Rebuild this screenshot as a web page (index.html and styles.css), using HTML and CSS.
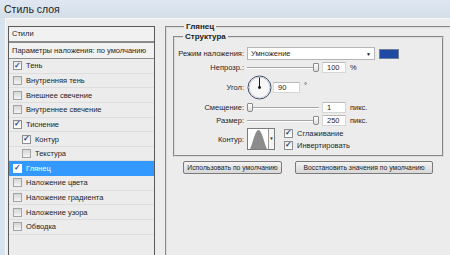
FILE: index.html
```html
<!DOCTYPE html>
<html lang="ru">
<head>
  <meta charset="UTF-8" />
  <title>Стиль слоя</title>
  <link rel="stylesheet" href="styles.css">
</head>
<body>

<div class="window">
  <div class="titlebar">Стиль слоя</div>

  <div class="client">
    <div class="styles-panel">
      <div class="panel-head">Стили</div>
      <div class="panel-blend">Параметры наложения: по умолчанию</div>
      <ul class="style-list">
        <li class="item"><span class="check on">✓</span>Тень</li>
        <li class="item"><span class="check"></span>Внутренняя тень</li>
        <li class="item"><span class="check"></span>Внешнее свечение</li>
        <li class="item"><span class="check"></span>Внутреннее свечение</li>
        <li class="item"><span class="check on">✓</span>Тиснение</li>
        <li class="item sub"><span class="check on">✓</span>Контур</li>
        <li class="item sub"><span class="check"></span>Текстура</li>
        <li class="item active"><span class="check on">✓</span>Глянец</li>
        <li class="item"><span class="check"></span>Наложение цвета</li>
        <li class="item"><span class="check"></span>Наложение градиента</li>
        <li class="item"><span class="check"></span>Наложение узора</li>
        <li class="item"><span class="check"></span>Обводка</li>
        <li class="item empty"></li>
      </ul>
    </div>

    <div class="settings">
      <fieldset class="group outer">
        <legend>Глянец</legend>

        <fieldset class="group inner">
          <legend>Структура</legend>

          <div class="row r-mode">
            <label class="row-label">Режим наложения:</label>
            <div class="select"><span>Умножение</span><span class="arrow">▼</span></div>
            <div class="swatch"></div>
          </div>

          <div class="row r-small">
            <label class="row-label">Непрозр.:</label>
            <div class="slider end"><span class="thumb"></span></div>
            <div class="field">100</div>
            <span class="unit">%</span>
          </div>

          <div class="row r-angle">
            <label class="row-label">Угол:</label>
            <svg class="dial" width="25" height="25" viewBox="0 0 25 25">
              <circle cx="12.5" cy="12.5" r="11.5" fill="#f7f7f7" stroke="#3c4a63" stroke-width="1"/>
              <circle cx="12.5" cy="12.5" r="10.3" fill="none" stroke="#c9ced8" stroke-width="1"/>
              <line x1="12.5" y1="12.5" x2="12.5" y2="2.5" stroke="#1d1d1d" stroke-width="1"/>
              <circle cx="12.5" cy="12.5" r="1.4" fill="#111"/>
            </svg>
            <div class="field angle">90</div>
            <span class="unit deg">°</span>
          </div>

          <div class="row r-small">
            <label class="row-label">Смещение:</label>
            <div class="slider"><span class="thumb"></span></div>
            <div class="field">1</div>
            <span class="unit">пикс.</span>
          </div>

          <div class="row r-small">
            <label class="row-label">Размер:</label>
            <div class="slider end"><span class="thumb"></span></div>
            <div class="field">250</div>
            <span class="unit">пикс.</span>
          </div>

          <div class="row r-contour">
            <label class="row-label">Контур:</label>
            <div class="contour">
              <svg width="19" height="20" viewBox="0 0 19 20">
                <rect width="19" height="20" fill="#fff"/>
                <path d="M1 20 C4 14 6 1 9.5 1 C13 1 15 14 18 20 Z" fill="#8c8c8c"/>
              </svg>
              <span class="contour-arrow">▼</span>
            </div>
            <div class="options">
              <div class="option"><span class="check on">✓</span>Сглаживание</div>
              <div class="option"><span class="check on">✓</span>Инвертировать</div>
            </div>
          </div>
        </fieldset>

        <div class="buttons">
          <button class="btn b-use">Использовать по умолчанию</button>
          <button class="btn b-reset">Восстановить значения по умолчанию</button>
        </div>
      </fieldset>
    </div>
  </div>
</div>

</body>
</html>
```

FILE: styles.css
```css
* { box-sizing: border-box; }
body {
  margin: 0;
  font-family: "Liberation Sans", Arial, sans-serif;
  font-size: 7.5px;
  color: #262626;
  background: #ececec;
}

.window { width: 450px; height: 255px; overflow: hidden; background: #d8e2ed; }
.titlebar {
  height: 18px;
  line-height: 18px;
  padding-left: 4px;
  font-size: 10.5px;
  color: #1e1e1e;
  background: linear-gradient(#dfe8f2, #d3dee9);
}
.client {
  display: flex;
  align-items: flex-start;
  margin-left: 5px;
  height: 237px;
  padding: 7px 0 0 2px;
  background: #ececec;
  border-top: 1px solid #f8f8f8;
  border-left: 1px solid #f8f8f8;
}

/* styles list */
.styles-panel {
  width: 147px;
  height: 240px;
  flex: none;
  border: 1px solid #5a5a5a;
  background: #ececec;
}
.panel-head {
  height: 16px;
  line-height: 13px;
  padding-left: 3px;
  background: #f1f1f1;
  border-bottom: 2px solid #8a8a8a;
}
.panel-blend {
  height: 16px;
  line-height: 15px;
  padding-left: 3px;
  background: #f1f1f1;
  border-bottom: 1px solid #8f8f8f;
}
.style-list { list-style: none; margin: 0; padding: 0; }
.item {
  display: flex;
  align-items: center;
  gap: 4px;
  height: 14.65px;
  padding-left: 4px;
  border-bottom: 1px solid #dedede;
}
.item.sub { padding-left: 13px; }
.item.active { background: #3399ff; color: #fff; border-bottom-color: #3399ff; }
.item.empty { border-bottom: none; }

.check {
  display: inline-flex;
  align-items: center;
  justify-content: center;
  width: 9px;
  height: 9px;
  flex: none;
  border: 1px solid #a3a3a3;
  background: linear-gradient(#d6d6d6, #f4f4f4);
  font-size: 8px;
  line-height: 1;
  font-weight: bold;
  color: #27418a;
}
.check.on { border-color: #8e8f8f; background: linear-gradient(#e8e8e8, #ffffff); }
.item.active .check { background: #fff; border-color: #fff; }

/* settings side */
.settings { margin-left: 10px; margin-top: -4px; }
.group {
  margin: 0;
  border: 2px groove #dcdcdc;
}
.group legend {
  font-weight: bold;
  font-size: 8px;
  line-height: 10px;
  padding: 0 2px;
  color: #1b1b1b;
}
.outer { width: 300px; height: 250px; padding: 0 0 0 6px; }
.outer > legend { margin-left: 11px; }
.inner { width: 271px; margin-top: 0; padding: 5px 0 3px 0; }
.inner > legend { margin-left: 8px; }

.row { display: flex; align-items: center; margin-bottom: 2px; }
.row-label { width: 72px; flex: none; text-align: right; padding-right: 3px; }
.r-mode { height: 13px; }
.r-small { height: 11px; }
.r-angle { height: 25px; margin-top: 1px; }
.r-contour { height: 22px; }

.select {
  display: flex;
  align-items: center;
  justify-content: space-between;
  width: 128px;
  height: 13px;
  padding: 0 3px;
  background: #fff;
  border: 1px solid #b5b5b5;
}
.arrow { font-size: 5px; color: #111; }
.swatch {
  width: 20px;
  height: 10px;
  margin-left: 4px;
  background: #1f4aa3;
  border: 1px solid #6f7f99;
}

.slider {
  display: flex;
  align-items: center;
  width: 72px;
  height: 11px;
  background: linear-gradient(transparent 5px, #a7a7a7 5px, #a7a7a7 6px, #fdfdfd 6px, #fdfdfd 7px, transparent 7px);
}
.slider.end { justify-content: flex-end; }
.thumb {
  width: 6px;
  height: 9px;
  border: 1px solid #8b8b8b;
  border-radius: 1px 1px 2px 2px;
  background: linear-gradient(#ffffff, #dcdcdc);
}
.field {
  width: 24px;
  height: 11px;
  line-height: 10px;
  margin-left: 3px;
  padding-left: 4px;
  background: #fff;
  border: 1px solid #d6d6d6;
  border-top-color: #b9b9b9;
}
.field.angle { width: 27px; margin-left: 1px; }
.unit { margin-left: 4px; }
.unit.deg { align-self: flex-start; margin-top: 6px; }

.contour {
  display: flex;
  align-items: center;
  width: 28px;
  height: 22px;
  padding: 0 0 0 1px;
  background: #fff;
  border: 1px solid #7b7b7b;
}
.contour svg { display: block; }
.contour-arrow {
  flex: 1;
  height: 20px;
  line-height: 20px;
  text-align: center;
  font-size: 4.5px;
  border-left: 1px solid #9a9a9a;
  background: #f4f4f4;
}
.options { display: flex; flex-direction: column; gap: 1px; margin-left: 9px; }
.option { display: flex; align-items: center; gap: 4px; height: 11px; }

.buttons { display: flex; gap: 13px; margin: 4px 0 0 10px; }
.btn {
  height: 13px;
  padding: 0;
  white-space: nowrap;
  font-family: inherit;
  font-size: 6.8px;
  color: #1b1b1b;
  border: 1px solid #7a7a7a;
  border-radius: 2px;
  background: linear-gradient(#f4f4f4, #e4e4e4 50%, #d8d8d8);
}
.b-use { width: 99px; }
.b-reset { width: 138px; }
```
